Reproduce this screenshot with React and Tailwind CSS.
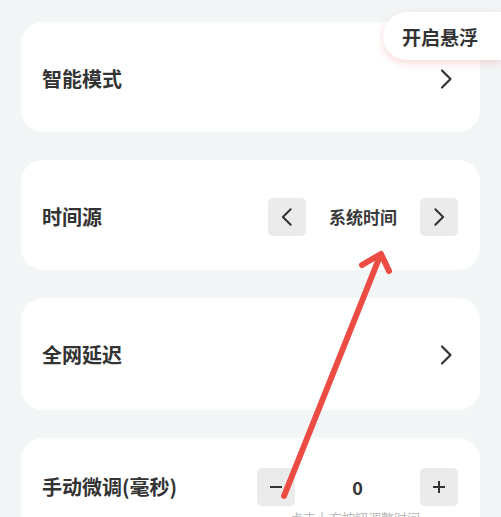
import React from "react";

const Chevron = ({ dir = "right", className = "" }) => (
  <svg viewBox="0 0 24 24" className={className} fill="none" stroke="#333" strokeWidth="2.2" strokeLinecap="round" strokeLinejoin="round">
    {dir === "right" ? <path d="M8 3.5 L16.5 12 L8 20.5" /> : <path d="M16 3.5 L7.5 12 L16 20.5" />}
  </svg>
);

const Btn = ({ children }) => (
  <div className="w-[38px] h-[38px] rounded-[5px] bg-[#ebebeb] flex items-center justify-center">{children}</div>
);

export default function App() {
  return (
    <div
      className="relative w-[501px] h-[517px] overflow-hidden bg-[#f2f6f6] text-[#333]"
      style={{ fontFamily: '"Noto Sans CJK SC", "Noto Sans", sans-serif' }}
    >
      <div className="flex flex-col gap-[28px] pl-[21px] pr-[21px] pt-[22px]">
        <div className="h-[110px] rounded-[22px] bg-white flex items-center justify-between pl-[21px] pr-[22px] pt-[3px]">
          <span className="text-[20px] font-bold leading-none">智能模式</span>
          <Chevron className="w-[24px] h-[26px]" />
        </div>
        <div className="h-[110px] rounded-[22px] bg-white flex items-center justify-between pl-[21px] pr-[22px] pt-[3px]">
          <span className="text-[20px] font-bold leading-none">时间源</span>
          <div className="flex items-center">
            <Btn><Chevron dir="left" className="w-[22px] h-[24px]" /></Btn>
            <span className="w-[114px] text-center text-[17px] font-bold leading-none text-[#3a3a3a]">系统时间</span>
            <Btn><Chevron className="w-[22px] h-[24px]" /></Btn>
          </div>
        </div>
        <div className="h-[112px] rounded-[22px] bg-white flex items-center justify-between pl-[21px] pr-[22px] pt-[2px]">
          <span className="text-[20px] font-bold leading-none">全网延迟</span>
          <Chevron className="w-[24px] h-[26px]" />
        </div>
        <div className="h-[110px] rounded-[22px] bg-white flex flex-col pl-[21px] pr-[22px] pt-[30px]">
          <div className="flex items-center justify-between">
            <span className="text-[20px] font-bold leading-none">手动微调(毫秒)</span>
            <div className="flex items-center">
              <Btn><span className="block w-[12px] h-[2px] bg-[#333]" /></Btn>
              <span className="w-[125px] text-center text-[18px] font-bold leading-none">0</span>
              <Btn>
                <span className="relative block w-[12px] h-[12px]">
                  <span className="absolute left-0 top-[5px] w-[12px] h-[2px] bg-[#333]" />
                  <span className="absolute top-0 left-[5px] w-[2px] h-[12px] bg-[#333]" />
                </span>
              </Btn>
            </div>
          </div>
          <div className="mt-[5px] pl-[248px] text-[13px] text-[#bbb] leading-none">点击上方按钮调整时间</div>
        </div>
      </div>

      <div className="absolute right-0 top-[12px] w-[118px] h-[48px] rounded-l-full bg-white flex items-center pl-[19px] shadow-[0_3px_8px_rgba(240,170,170,0.45)]">
        <span className="text-[19px] font-bold leading-none">开启悬浮</span>
      </div>

      <svg className="absolute left-0 top-0 pointer-events-none" width="501" height="517" viewBox="0 0 501 517">
        <g stroke="#ec4c44" strokeWidth="6" strokeLinecap="round" strokeLinejoin="round" fill="none">
          <path d="M284 496 L380 256" />
          <path d="M362 265 L381 254 L389 271" />
        </g>
      </svg>
    </div>
  );
}
